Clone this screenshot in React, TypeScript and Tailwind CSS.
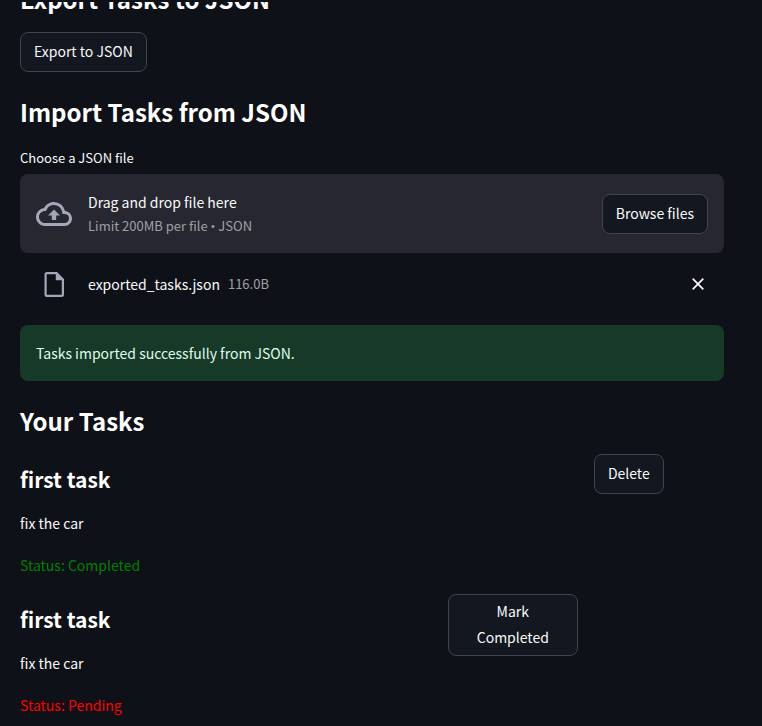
import { useState } from "react";

type Task = { id: number; title: string; description: string; done: boolean };

const initialTasks: Task[] = [
  { id: 1, title: "first task", description: "fix the car", done: true },
  { id: 2, title: "first task", description: "fix the car", done: false },
];

const buttonClass =
  "min-h-10 rounded-lg border border-[#41444c] bg-[#131720] px-[13px] pt-[3px] pb-[5px] text-sm leading-[26px] text-[#fafafa] hover:border-[#ff4b4b] hover:text-[#ff4b4b]";

function SectionHeading({ children }: { children: string }) {
  return <h2 className="pt-[7px] pb-[17px] text-2xl leading-[33px] font-semibold text-white">{children}</h2>;
}

function CloudUploadIcon() {
  return (
    <svg viewBox="0 0 24 24" className="size-9 shrink-0 fill-[#a3a8b8]" aria-hidden="true">
      <path d="M19.35 10.04A7.49 7.49 0 0 0 12 4C9.11 4 6.6 5.64 5.35 8.04A5.994 5.994 0 0 0 0 14c0 3.31 2.69 6 6 6h13c2.76 0 5-2.24 5-5 0-2.64-2.05-4.78-4.65-4.96zM19 18H6c-2.21 0-4-1.79-4-4 0-2.05 1.53-3.76 3.56-3.97l1.07-.11.5-.95A5.469 5.469 0 0 1 12 6c2.62 0 4.88 1.86 5.39 4.43l.3 1.5 1.53.11A2.98 2.98 0 0 1 22 15c0 1.65-1.35 3-3 3zM8 13h2.55v3h2.9v-3H16l-4-4z" />
    </svg>
  );
}

function FileIcon() {
  return (
    <svg viewBox="0 0 20 25" className="h-[25px] w-5 fill-[#a3a8b8]" aria-hidden="true">
      <path
        fillRule="evenodd"
        d="M3 0h10L20 7V22.500a2.500 2.500 0 0 1-2.500 2.500H3A2.500 2.500 0 0 1 .5 22.500v-20A2.500 2.500 0 0 1 3 0zM2.700 2.200v20.600h15.100V8.200H11.800V2.200z"
      />
    </svg>
  );
}

function CloseIcon() {
  return (
    <svg viewBox="0 0 12 12" className="size-3 stroke-[#fafafa]" strokeWidth="1.7" aria-hidden="true">
      <path d="M.7.700 11.300 11.300M11.300.700.700 11.300" />
    </svg>
  );
}

function TaskRow({ task, onComplete, onDelete }: { task: Task; onComplete: () => void; onDelete: () => void }) {
  return (
    <li className="flex gap-4">
      <div className="flex grow basis-[calc(60%-16px)] flex-col">
        <h3 className="pt-[11px] pb-[17px] text-[21px] leading-7 font-semibold text-white">{task.title}</h3>
        <p className="mb-4">{task.description}</p>
        <p className={task.done ? "mb-4 text-[#008000]" : "mb-4 text-[#ff0000]"}>
          Status: {task.done ? "Completed" : "Pending"}
        </p>
      </div>
      <div className="grow basis-[calc(20%-16px)]">
        {!task.done && (
          <button type="button" onClick={onComplete} className={`${buttonClass} w-full`}>
            Mark <br />
            Completed
          </button>
        )}
      </div>
      <div className="grow basis-[calc(20%-16px)]">
        {task.done && (
          <button type="button" onClick={onDelete} className={buttonClass}>
            Delete
          </button>
        )}
      </div>
    </li>
  );
}

export default function App() {
  const [tasks, setTasks] = useState(initialTasks);
  const [file, setFile] = useState<string | null>("exported_tasks.json");

  return (
    <div className="h-screen overflow-hidden bg-[#0e1117] font-['Noto_Sans_CJK_SC','Noto_Sans',sans-serif] text-sm leading-[26px] text-[#fafafa]">
      <header className="fixed inset-x-0 top-0 h-0.5 bg-[#0e1117]" />
      <main className="-mt-[25px] flex flex-col pr-[38px] pl-5">
        <SectionHeading>Export Tasks to JSON</SectionHeading>
        <button type="button" className={`${buttonClass} mb-4 self-start`}>
          Export to JSON
        </button>

        <SectionHeading>Import Tasks from JSON</SectionHeading>
        <label htmlFor="json-file" className="mb-1 text-[13px] leading-[25px]">
          Choose a JSON file
        </label>
        <input id="json-file" type="file" accept=".json" className="hidden" />
        <section className="flex items-center gap-4 rounded-lg bg-[#262730] p-4">
          <CloudUploadIcon />
          <div className="grow">
            <p className="leading-[25px]">Drag and drop file here</p>
            <p className="text-[13px] leading-[22px] text-[#a0a1a5]">
              Limit 200MB per file <span className="font-['Open_Sans',sans-serif]">•</span> JSON
            </p>
          </div>
          <button type="button" className={buttonClass}>
            Browse files
          </button>
        </section>
        <div className="mb-4 flex h-14 items-center px-4 pt-1.5">
          {file && (
            <>
              <span className="mr-4 flex w-9 justify-center">
                <FileIcon />
              </span>
              <span className="mr-2">{file}</span>
              <small className="grow text-[13px] text-[#a0a1a5]">116.0B</small>
              <button type="button" aria-label="Remove file" onClick={() => setFile(null)} className="p-1">
                <CloseIcon />
              </button>
            </>
          )}
        </div>

        <div role="alert" className="mb-4 rounded-lg bg-[#173928] px-4 py-[15px] text-[#dffde9]">
          Tasks imported successfully from JSON.
        </div>

        <SectionHeading>Your Tasks</SectionHeading>
        <ul>
          {tasks.map((task) => (
            <TaskRow
              key={task.id}
              task={task}
              onComplete={() => setTasks(tasks.map((t) => (t.id === task.id ? { ...t, done: true } : t)))}
              onDelete={() => setTasks(tasks.filter((t) => t.id !== task.id))}
            />
          ))}
        </ul>
      </main>
    </div>
  );
}
